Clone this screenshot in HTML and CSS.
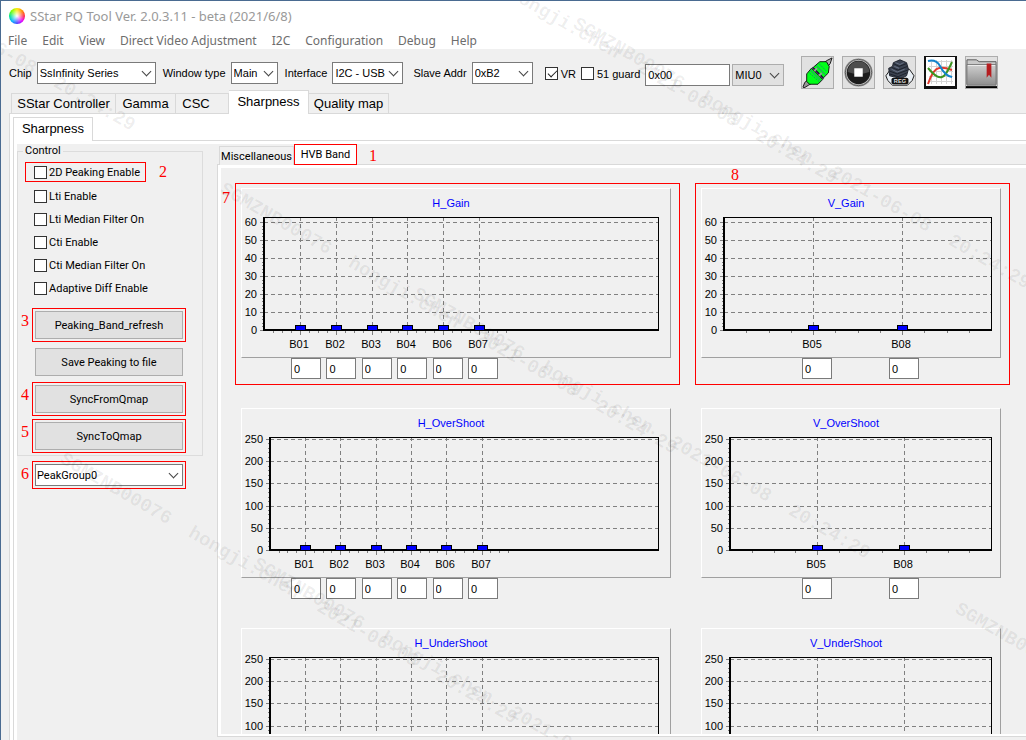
FILE: index.html
```html
<!DOCTYPE html>
<html lang="en">
<head>
    <meta charset="UTF-8">
    <meta name="viewport" content="width=device-width, initial-scale=1.0">
    <title>SStar PQ Tool Ver. 2.0.3.11 - beta (2021/6/8)</title>
    <link rel="stylesheet" href="styles.css">
</head>
<body>
    <div class="window">
        <header class="titlebar">
            <span class="app-icon"></span>
            <h1>SStar PQ Tool Ver. 2.0.3.11 - beta (2021/6/8)</h1>
        </header>

        <nav class="menu">
            <a href="#">File</a>
            <a href="#">Edit</a>
            <a href="#">View</a>
            <a href="#">Direct Video Adjustment</a>
            <a href="#">I2C</a>
            <a href="#">Configuration</a>
            <a href="#">Debug</a>
            <a href="#">Help</a>
        </nav>

        <div class="toolbar">
            <div class="field">
                <label for="chip">Chip</label>
                <span class="combo combo-chip"><select id="chip"><option>SsInfinity Series</option></select></span>
            </div>
            <div class="field">
                <label for="windowType">Window type</label>
                <span class="combo combo-window"><select id="windowType"><option>Main</option></select></span>
            </div>
            <div class="field">
                <label for="interface">Interface</label>
                <span class="combo combo-interface"><select id="interface"><option>I2C - USB</option></select></span>
            </div>
            <div class="field field-slave">
                <label for="slave">Slave Addr</label>
                <span class="combo combo-slave"><select id="slave"><option>0xB2</option></select></span>
            </div>
            <div class="guards">
                <label class="check"><input type="checkbox" checked>VR</label>
                <label class="check"><input type="checkbox">51 guard</label>
            </div>
            <div class="address">
                <input type="text" class="textbox" value="0x00" aria-label="Guard address">
                <span class="combo combo-miu"><select aria-label="MIU"><option>MIU0</option></select></span>
            </div>
            <div class="tools">
                <button type="button" class="tool" aria-label="Connect">
                    <svg viewBox="0 0 33 33">
                        <path d="M1 32 L3 27 L8 23 L12 27 L7 30 L2 33 Z" fill="#999" stroke="#111"/>
                        <path d="M32 1 L30 7 L26 12 L21 8 L26 4 Z" fill="#aaa" stroke="#111"/>
                        <path d="M5 26 L5 18 L10 12 L22 24 L17 29 L8 29 Z" fill="#00ff18" stroke="#111"/>
                        <path d="M12 11 L19 5 L26 5 L29 10 L28 17 L23 22 Z" fill="#00ff18" stroke="#111"/>
                        <path d="M11 11 L23 23" stroke="#20223c" stroke-width="2"/>
                        <path d="M13 15 L16 12 M18 20 L21 17" stroke="#999" stroke-width="2"/>
                        <path d="M8 17 L18 26 M18 7 L26 15" stroke="#168c6b" stroke-dasharray="2 1"/>
                        <path d="M9 14 L20 25 M15 9 L25 19" stroke="#48639b"/>
                    </svg>
                </button>
                <button type="button" class="tool" aria-label="Stop">
                    <svg viewBox="0 0 33 33">
                        <circle cx="16.5" cy="16.5" r="15" fill="#8c8c8c"/>
                        <circle cx="16.5" cy="16.5" r="14" fill="#c4c4c4" stroke="#555"/>
                        <circle cx="16.5" cy="16.5" r="12.5" fill="#1c1c1c"/>
                        <path d="M5 16 A11.500 11.500 0 0 1 28 16 Q16 20 5 16" fill="#4d4d4d"/>
                        <rect x="12" y="12" width="9" height="9" fill="#fff"/>
                    </svg>
                </button>
                <button type="button" class="tool" aria-label="Registers">
                    <svg viewBox="0 0 33 33">
                        <path d="M2 20 L7 13 L27 13 L32 20 L30 25 L25 30 L9 30 L4 25 Z" fill="#e9eff5" stroke="#111"/>
                        <path d="M5 12 L9 10 L10 6 L17 3 L24 6 L26 13 L24 20 L18 23 L6 20 Z" fill="#3b4250" stroke="#1d212b"/>
                        <path d="M10 7 L16 10 L24 7 M8 11 L15 14 L25 10 M6 15 L14 18 L25 14 M6 18 L15 21 L24 17" stroke="#1b202a" fill="none"/>
                        <path d="M12 6 L17 8 L21 6 M11 10 L16 12 M8 13 L14 16 L22 13" stroke="#697386" fill="none"/>
                        <rect x="8" y="22" width="18" height="7" rx="2" fill="#111"/>
                        <text x="17" y="28" class="reg-text">REG</text>
                    </svg>
                </button>
                <button type="button" class="tool tool-graph" aria-label="Curves">
                    <svg viewBox="0 0 31 31">
                        <rect width="31" height="31" fill="#111"/>
                        <rect x="1" width="29" height="29" fill="#fff"/>
                        <path d="M4 4.500H28M4 9.500H28M4 14.500H28M4 19.500H28M4 24.500H28M6.500 3V27M11.500 3V27M16.500 3V27M21.500 3V27M26.500 3V27" stroke="#d4d4d4"/>
                        <path d="M3 27 Q8 12 14 11 Q19 10 27 13" fill="none" stroke="#e33a2e" stroke-width="2"/>
                        <path d="M3 11 Q12 22 17 20 Q21 19 27 5" fill="none" stroke="#3c9420" stroke-width="2"/>
                        <path d="M3 4 Q11 2 15 9 Q20 19 27 20" fill="none" stroke="#1384cd" stroke-width="2"/>
                    </svg>
                </button>
                <button type="button" class="tool" aria-label="Bookmarks">
                    <svg viewBox="0 0 33 33">
                        <defs>
                            <linearGradient id="folder" x2="0" y2="1">
                                <stop offset="0" stop-color="#d0d0d0"/>
                                <stop offset="1" stop-color="#8d8d8d"/>
                            </linearGradient>
                        </defs>
                        <path d="M1 29 V3 H11 L14 5 H32 V29 Z" fill="#c9c9c9" stroke="#555"/>
                        <path d="M1 8 H32 V30 H1 Z" fill="url(#folder)" stroke="#777"/>
                        <path d="M2 9 H31" stroke="#eee"/>
                        <path d="M0 32 H33" stroke="#000" stroke-width="2"/>
                        <path d="M22 7 H27 V22 L24.500 19 L22 22 Z" fill="#b51d20"/>
                    </svg>
                </button>
            </div>
        </div>

        <div class="tabs main-tabs">
            <button type="button" class="tab tab-controller">SStar Controller</button>
            <button type="button" class="tab tab-gamma">Gamma</button>
            <button type="button" class="tab tab-csc">CSC</button>
            <button type="button" class="tab tab-sharpness active">Sharpness</button>
            <button type="button" class="tab tab-quality">Quality map</button>
        </div>

        <main class="page">
            <div class="tabs sub-tabs">
                <button type="button" class="tab tab-sharpness active">Sharpness</button>
            </div>

            <div class="subpage">
                <aside class="side">
                    <fieldset class="control">
                        <legend>Control</legend>
                        <div class="checks">
                            <label class="check marked">
                                <input type="checkbox">2D Peaking Enable
                                <span class="note note-right">2</span>
                            </label>
                            <label class="check"><input type="checkbox">Lti Enable</label>
                            <label class="check"><input type="checkbox">Lti Median Filter On</label>
                            <label class="check"><input type="checkbox">Cti Enable</label>
                            <label class="check"><input type="checkbox">Cti Median Filter On</label>
                            <label class="check"><input type="checkbox">Adaptive Diff Enable</label>
                        </div>
                        <div class="actions">
                            <div class="item"><span class="note note-left">3</span><button type="button" class="button framed">Peaking_Band_refresh</button></div>
                            <div class="item"><button type="button" class="button">Save Peaking to file</button></div>
                            <div class="item"><span class="note note-left">4</span><button type="button" class="button framed">SyncFromQmap</button></div>
                            <div class="item"><span class="note note-left">5</span><button type="button" class="button framed">SyncToQmap</button></div>
                        </div>
                    </fieldset>
                    <div class="item group">
                        <span class="note note-left">6</span>
                        <span class="combo framed"><select aria-label="Peak group"><option>PeakGroup0</option></select></span>
                    </div>
                </aside>

                <section class="bands">
                    <div class="tabs band-tabs">
                        <button type="button" class="tab">Miscellaneous</button>
                        <button type="button" class="tab active">HVB Band</button>
                        <span class="band-note">1</span>
                    </div>
                    <div class="band-page">
                        <div class="charts" id="charts"></div>
                    </div>
                </section>
            </div>
        </main>

        <svg class="watermark" id="watermark" aria-hidden="true"></svg>
    </div>

    <script src="charts.js"></script>
</body>
</html>
```
FILE: styles.css
```css
* {
    margin: 0;
    padding: 0;
    box-sizing: border-box;
}

body {
    font-family: "Liberation Sans", Arial, sans-serif;
    font-size: 11px;
    color: #000;
    background: #f0f0f0;
}

button,
input,
select {
    font: inherit;
    color: inherit;
}

.window {
    position: relative;
    display: flex;
    flex-direction: column;
    height: 100vh;
    overflow: hidden;
    border-top: 1px solid #4a6b91;
    border-left: 1px solid #4a6b91;
}

/* title and menu */
.titlebar {
    display: flex;
    align-items: center;
    gap: 5px;
    height: 29px;
    padding-left: 8px;
    background: #fff;
}

.app-icon {
    width: 16px;
    height: 16px;
    border-radius: 50%;
    background: radial-gradient(#fff, transparent 65%), conic-gradient(#ffe800, #ff8a00, #ff2a4a, #e600ff, #4a46ff, #00b4ff, #00e68a, #7dff00, #ffe800);
}

.titlebar h1 {
    font: 13px "Noto Sans", sans-serif;
    color: #999;
}

.menu {
    display: flex;
    gap: 15px;
    height: 19px;
    padding-left: 7px;
    background: #fff;
}

.menu a {
    font: 12px/22px "Noto Sans", sans-serif;
    color: #6d6d6d;
    text-decoration: none;
}

/* toolbar */
.toolbar {
    display: flex;
    align-items: center;
    height: 41px;
    padding: 7px 0 1px 8px;
}

.field {
    display: flex;
    align-items: center;
    gap: 5px;
    margin-right: 7px;
}

.field-slave {
    margin-left: 3px;
}

.combo {
    position: relative;
    display: block;
    height: 22px;
}

.combo::after {
    content: "";
    position: absolute;
    right: 6px;
    top: 6px;
    width: 6px;
    height: 6px;
    border: solid #444;
    border-width: 0 1px 1px 0;
    transform: rotate(45deg);
    pointer-events: none;
}

.combo select {
    appearance: none;
    display: block;
    width: 100%;
    height: 22px;
    padding: 0 2px;
    border: 1px solid #7a7a7a;
    border-radius: 0;
    background: #fff;
}

.combo-chip { width: 119px; }
.combo-window { width: 47px; }
.combo-interface { width: 71px; }
.combo-slave { width: 61px; }
.combo-miu { width: 52px; }

.combo-miu select {
    border-color: #adadad;
    background: #e1e1e1;
}

.check {
    display: flex;
    align-items: center;
    gap: 3px;
}

.check input {
    appearance: none;
    position: relative;
    flex: none;
    width: 13px;
    height: 13px;
    border: 1px solid #333;
    background: #fff;
}

.check input:checked::after {
    content: "";
    position: absolute;
    left: 4px;
    top: 0;
    width: 4px;
    height: 8px;
    border: solid #222;
    border-width: 0 1px 1px 0;
    transform: rotate(45deg);
}

.guards {
    display: flex;
    gap: 5px;
    margin: 2px 5px 0;
}

.address {
    display: flex;
    gap: 2px;
    margin: 4px 17px 0 0;
}

.textbox {
    width: 85px;
    height: 22px;
    padding: 0 2px;
    border: 1px solid #7a7a7a;
    background: #fff;
}

.tools {
    display: flex;
    gap: 8px;
}

.tool {
    width: 33px;
    height: 33px;
    border: 1px solid #adadad;
    background: #e1e1e1;
}

.tool svg {
    display: block;
    width: 31px;
    height: 31px;
}

.tool-graph {
    border-color: #111;
}

.reg-text {
    font: bold 6px "Liberation Sans", sans-serif;
    fill: #ddd;
    text-anchor: middle;
}

/* tabs */
.tabs {
    position: relative;
    z-index: 1;
    display: flex;
    align-items: flex-end;
}

.tab {
    height: 20px;
    border: 1px solid #d9d9d9;
    border-width: 1px 1px 0 0;
    background: #f0f0f0;
    white-space: nowrap;
}

.tab:first-child {
    border-left-width: 1px;
}

.tab.active {
    background: #fff;
}

.main-tabs {
    height: 23px;
    padding-left: 10px;
}

.main-tabs .tab,
.sub-tabs .tab {
    font-size: 13px;
}

.main-tabs .active {
    height: 24px;
    margin-bottom: -1px;
    padding-bottom: 2px;
}

.tab-controller { width: 105px; }
.tab-gamma { width: 60px; }
.tab-csc { width: 53px; padding-right: 12px; }
.tab-sharpness { width: 80px; }
.tab-quality { width: 80px; }

.page {
    flex: 1;
    display: flex;
    flex-direction: column;
    min-height: 0;
    margin-left: 8px;
    padding: 3px 0 0 3px;
    border: 1px solid #d9d9d9;
    border-width: 1px 0 0 1px;
    background: #fff;
}

.sub-tabs .tab {
    height: 24px;
    margin-bottom: -1px;
    padding-bottom: 2px;
}

.subpage {
    flex: 1;
    display: flex;
    min-height: 0;
    border: 1px solid #d9d9d9;
    border-width: 1px 0 0 1px;
    padding: 3px 0 0 3px;
}

/* left column */
.side {
    flex: none;
    width: 200px;
    background: #f0f0f0;
    font-family: Roboto, sans-serif;
}

.control {
    width: 186px;
    height: 312px;
    border: 1px solid #dcdcdc;
}

.control legend {
    margin-left: 5px;
    padding: 0 2px;
    line-height: 14px;
}

.checks {
    padding: 4px 0 0 7px;
}

.checks .check {
    position: relative;
    width: 121px;
    height: 23px;
    padding-left: 9px;
    gap: 2px;
    white-space: nowrap;
}

.checks .marked {
    height: 20px;
    padding-left: 8px;
    margin-bottom: 3px;
    border: 1px solid #f00;
}

.actions {
    display: grid;
    gap: 9px;
    padding: 11px 0 0 17px;
}

.item {
    position: relative;
    width: 148px;
}

.button {
    display: block;
    width: 100%;
    height: 28px;
    border: 1px solid #adadad;
    background: #e1e1e1;
}

.framed {
    outline: 1px solid #f00;
    outline-offset: 2px;
}

.group {
    margin: 8px 0 0 18px;
}

.group select {
    padding: 0 1px;
}

/* red callout numbers */
.note,
.band-note {
    font: 16px/18px "Liberation Serif", serif;
    color: #f00;
}

.note {
    position: absolute;
}

.note-left {
    left: -14px;
    top: 1px;
}

.note-right {
    left: 133px;
    top: 0;
}

/* band panels */
.bands {
    flex: 1;
    display: flex;
    flex-direction: column;
    min-width: 0;
    background: #f0f0f0;
}

.band-tabs {
    height: 21px;
    padding-left: 2px;
}

.band-tabs .tab {
    height: 19px;
    width: 75px;
    font-family: Roboto, sans-serif;
}

.band-tabs .active {
    width: 63px;
    height: 21px;
    border: 1px solid #f00;
}

.band-note {
    margin-left: 12px;
}

.band-page {
    flex: 1;
    min-height: 0;
    overflow: auto;
    scrollbar-width: none;
    margin: 0 0 4px 1px;
    padding: 15px 0 0 14px;
    border: solid #fff;
    border-width: 3px 0 2px 3px;
    outline: 1px solid #d9d9d9;
}

.charts {
    display: grid;
    grid-template-columns: max-content max-content;
    gap: 18px 15px;
}

.band {
    position: relative;
    padding: 4px 8px 5px 5px;
    border: 1px solid transparent;
}

.band.marked {
    border-color: #f00;
}

.chart {
    display: block;
    border: 1px solid;
    border-color: #fff #a0a0a0 #a0a0a0 #fff;
    shape-rendering: crispEdges;
}

.chart text {
    font: 11px "Liberation Sans", Arial, sans-serif;
}

.chart .title {
    fill: #00f;
    text-anchor: middle;
}

.chart .scale {
    text-anchor: end;
}

.chart .name {
    text-anchor: middle;
}

.chart .grid {
    stroke: #808080;
    stroke-dasharray: 4 3;
}

.chart .tick {
    stroke: #808080;
}

.chart .frame {
    fill: none;
    stroke: #000;
}

.chart .axis {
    fill: none;
    stroke: #000;
    stroke-width: 2px;
}

.chart .bar {
    fill: #00f;
    stroke: #000;
}

.values {
    display: flex;
    justify-content: space-between;
    width: 207px;
    margin-left: 50px;
}

.values.pair {
    width: 117px;
    margin-left: 101px;
}

.values input {
    width: 30px;
    height: 21px;
    padding: 0 2px;
    border: 1px solid #7a7a7a;
    background: #fff;
}

.note-h {
    left: -14px;
    top: 5px;
}

.note-v {
    left: 35px;
    top: -18px;
}

.watermark {
    position: absolute;
    z-index: 2;
    left: 0;
    top: 0;
    width: 100%;
    height: 100%;
    pointer-events: none;
}

.watermark text {
    font: bold 19px "Liberation Mono", monospace;
    fill: #000;
    fill-opacity: 0.07;
    white-space: pre;
}
```
FILE: charts.js
```js
const H_BANDS = ['B01', 'B02', 'B03', 'B04', 'B06', 'B07'];
const V_BANDS = ['B05', 'B08'];

const charts = [
    { title: 'H_Gain', bands: H_BANDS, max: 60, step: 10, first: 58, pitch: 35.8, note: '7' },
    { title: 'V_Gain', bands: V_BANDS, max: 60, step: 10, first: 111, pitch: 89, note: '8' },
    { title: 'H_OverShoot', bands: H_BANDS, max: 250, step: 50, first: 63, pitch: 35.3 },
    { title: 'V_OverShoot', bands: V_BANDS, max: 250, step: 50, first: 115, pitch: 87 },
    { title: 'H_UnderShoot', bands: H_BANDS, max: 250, step: 50, first: 63, pitch: 35.3 },
    { title: 'V_UnderShoot', bands: V_BANDS, max: 250, step: 50, first: 115, pitch: 87 }
];

const TOP = 28;
const BASE = 141;

function line(cls, x1, y1, x2, y2) {
    return `<line class="${cls}" x1="${x1}" y1="${y1}" x2="${x2}" y2="${y2}"/>`;
}

function drawChart(c) {
    const wide = c.bands === H_BANDS;
    const width = wide ? 428 : 298;
    const right = wide ? 416 : 289;
    const left = c.max > 99 ? 28 : 22;
    const topValue = c.max > 99 ? 30 : 33;
    const unit = (BASE - topValue) / c.max;
    let out = `<text class="title" x="${width / 2 - 5}" y="18">${c.title}</text>`;

    // value scale
    for (let v = 0; v <= c.max; v += c.step) {
        const y = Math.round(BASE - v * unit);
        out += `<text class="scale" x="${left - 7}" y="${y + 4}">${v}</text>`;
        out += line('tick', left - 4, y + 0.5, left, y + 0.5);
        if (v > 0) {
            out += line('grid', left, y + 0.5, right, y + 0.5);
        }
    }
    for (let v = 0; v <= c.max; v += c.step / 5) {
        const y = Math.round(BASE - v * unit) + 0.5;
        out += line('tick', left - 2, y, left, y);
    }

    // band scale
    for (let i = -3; i <= (c.bands.length - 1) * 4 + 3; i++) {
        const x = Math.round(c.first + i * c.pitch / 4) + 0.5;
        out += line('tick', x, BASE, x, BASE + (i % 4 === 0 ? 5 : 3));
    }
    c.bands.forEach((name, i) => {
        const x = Math.round(c.first + i * c.pitch);
        out += line('grid', x + 0.5, TOP, x + 0.5, BASE);
        out += `<text class="name" x="${x - 1}" y="159">${name}</text>`;
    });

    out += `<path class="frame" d="M${left} ${TOP + 0.5}H${right + 0.5}V${BASE}"/>`;
    out += `<path class="axis" d="M${left} ${TOP}V${BASE}H${right + 1}"/>`;
    c.bands.forEach((name, i) => {
        const x = Math.round(c.first + i * c.pitch);
        out += `<rect class="bar" x="${x - 4.5}" y="${BASE - 4.5}" width="10" height="5"/>`;
    });

    return `<svg class="chart" width="${width + 2}" height="170">${out}</svg>`;
}

document.getElementById('charts').innerHTML = charts.map(c => {
    const wide = c.bands === H_BANDS;
    const inputs = c.bands.map(b => `<input type="text" value="0" aria-label="${c.title} ${b}">`).join('');
    const note = c.note ? `<span class="note ${wide ? 'note-h' : 'note-v'}">${c.note}</span>` : '';
    return `<div class="band${c.note ? ' marked' : ''}">${note}${drawChart(c)}` +
        `<div class="values${wide ? '' : ' pair'}">${inputs}</div></div>`;
}).join('');

// user stamp repeated across the window
const STAMP = 'SGMZNB00076  hongji.chen  2021-06-08  20:24:29';
const stamps = [[-320, -132], [382, -79], [575, 26], [222, 191], [415, 296], [62, 461], [255, 566], [957, 611]];

document.getElementById('watermark').innerHTML = stamps
    .map(([x, y]) => `<text transform="translate(${x - 4} ${y}) rotate(30)">${STAMP}</text>`)
    .join('');
```
